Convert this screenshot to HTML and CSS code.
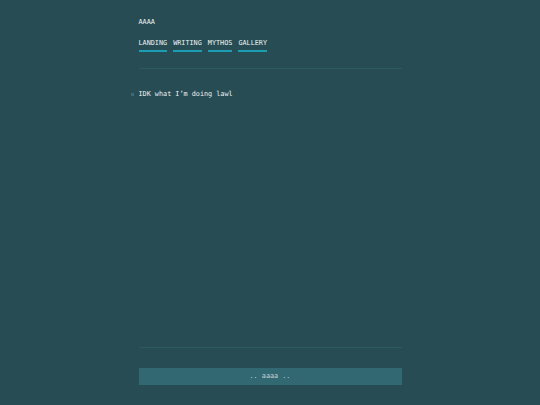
FILE: index.html
```html
<!DOCTYPE html>
<html>
<head>
<meta charset="utf-8">
<link rel="stylesheet" href="styles.css">
</head>
<body>
<div class="page">
  <header class="header">
    <div class="title">AAAA</div>
    <nav class="nav">
      <a class="nav-item">LANDING</a>
      <a class="nav-item">WRITING</a>
      <a class="nav-item">MYTHOS</a>
      <a class="nav-item">GALLERY</a>
    </nav>
  </header>
  <main class="main">
    <ul class="list">
      <li class="list-item">IDK what I’m doing lawl</li>
    </ul>
  </main>
  <footer class="footer">
    <div class="footer-bar">.. aaaa ..</div>
  </footer>
</div>
</body>
</html>
```
FILE: styles.css
```css
html, body {
  margin: 0;
  padding: 0;
  height: 100%;
}
body {
  background: #274c54;
  color: #eef3f4;
  font-family: "DejaVu Sans Mono", "Liberation Mono", monospace;
  font-size: 6.8px;
}
.page {
  width: 263px;
  margin: 0 auto;
  min-height: 405px;
  display: flex;
  flex-direction: column;
}
.header {
  padding-top: 18px;
  padding-bottom: 16px;
  border-bottom: 1px solid #2f5961;
}
.title {
  line-height: 9px;
  height: 9px;
}
.nav {
  display: flex;
  gap: 6px;
  margin-top: 12px;
}
.nav-item {
  display: block;
  line-height: 9px;
  padding-bottom: 2px;
  border-bottom: 2px solid #1b9db4;
  color: #eef3f4;
}
.main {
  flex: 1;
  border-bottom: 1px solid #2f5961;
}
.list {
  list-style: none;
  margin: 21px 0 0 0;
  padding: 0;
}
.list-item {
  position: relative;
  line-height: 9px;
}
.list-item::before {
  content: "";
  position: absolute;
  left: -8px;
  top: 3px;
  width: 3px;
  height: 3px;
  background: #3c6a72;
}
.footer {
  padding-top: 20px;
  padding-bottom: 20px;
}
.footer-bar {
  background: #316872;
  height: 17px;
  line-height: 17px;
  text-align: center;
  color: #c4d4d8;
}
```
